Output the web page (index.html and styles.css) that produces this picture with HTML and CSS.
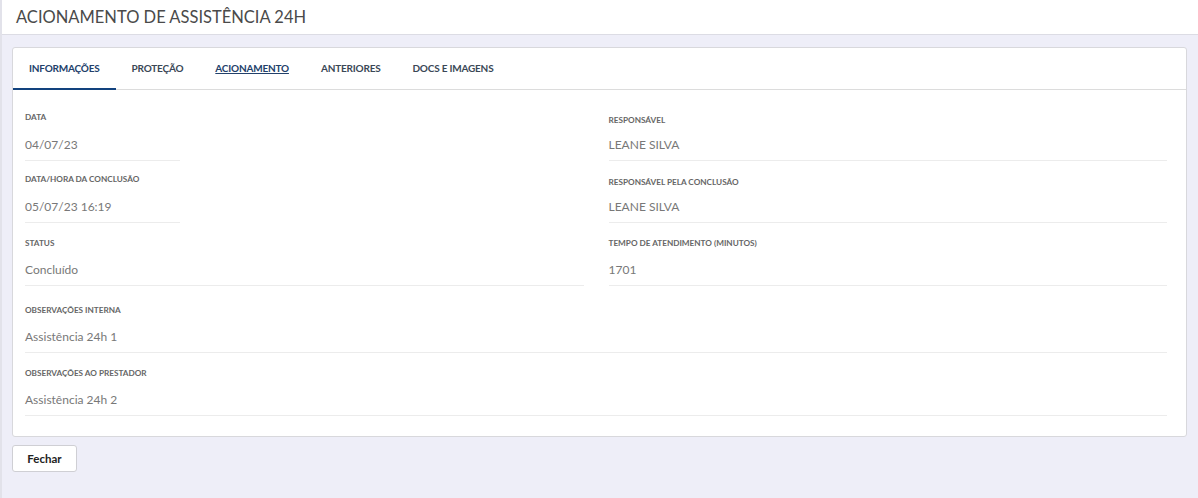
FILE: index.html
```html
<!DOCTYPE html>
<html lang="pt-BR">
<head>
<meta charset="utf-8">
<title>Acionamento de Assistência 24H</title>
<link rel="stylesheet" href="styles.css">
</head>
<body>
<header class="page-header">
  <h1 class="page-title">ACIONAMENTO DE ASSISTÊNCIA 24H</h1>
</header>
<main class="page-body">
  <section class="card">
    <nav class="tabs">
      <a class="tab tab-active">INFORMAÇÕES</a>
      <a class="tab">PROTEÇÃO</a>
      <a class="tab tab-link">ACIONAMENTO</a>
      <a class="tab">ANTERIORES</a>
      <a class="tab">DOCS E IMAGENS</a>
    </nav>
    <div class="details">
      <div class="col">
        <div class="field field-short">
          <div class="label">DATA</div>
          <div class="value">04/07/23</div>
        </div>
        <div class="field field-short">
          <div class="label">DATA/HORA DA CONCLUSÃO</div>
          <div class="value">05/07/23 16:19</div>
        </div>
        <div class="field field-mid">
          <div class="label">STATUS</div>
          <div class="value">Concluído</div>
        </div>
      </div>
      <div class="col">
        <div class="field field-low">
          <div class="label">RESPONSÁVEL</div>
          <div class="value">LEANE SILVA</div>
        </div>
        <div class="field field-low">
          <div class="label">RESPONSÁVEL PELA CONCLUSÃO</div>
          <div class="value">LEANE SILVA</div>
        </div>
        <div class="field field-mid">
          <div class="label">TEMPO DE ATENDIMENTO (MINUTOS)</div>
          <div class="value">1701</div>
        </div>
      </div>
      <div class="field field-mid field-wide field-first">
        <div class="label">OBSERVAÇÕES INTERNA</div>
        <div class="value">Assistência 24h 1</div>
      </div>
      <div class="field field-mid field-wide">
        <div class="label">OBSERVAÇÕES AO PRESTADOR</div>
        <div class="value">Assistência 24h 2</div>
      </div>
    </div>
  </section>
  <div class="actions">
    <button class="btn" type="button">Fechar</button>
  </div>
</main>
</body>
</html>
```

FILE: styles.css
```css
* {
  box-sizing: border-box;
}

html, body {
  margin: 0;
  height: 100%;
}

body {
  font-family: "Lato", "Noto Sans", sans-serif;
  background: #eeeef8;
  color: #444;
  border-left: 2px solid #e2e2ea;
}

.page-header {
  height: 35px;
  background: #fff;
  border-bottom: 1px solid #dcdce4;
  padding-left: 14px;
  display: flex;
  align-items: center;
}

.page-title {
  margin: 0;
  font-size: 16.5px;
  font-weight: 400;
  color: #4a4a4a;
}

.page-body {
  padding: 12px 11px 0 10px;
}

.card {
  background: #fff;
  border: 1px solid #d8d8dc;
  border-radius: 3px;
}

/* tab strip */
.tabs {
  display: flex;
  height: 42px;
  border-bottom: 1px solid #dcdcdc;
}

.tab {
  display: flex;
  align-items: center;
  padding: 0 16px;
  font-size: 10px;
  letter-spacing: -0.2px;
  font-weight: 700;
  color: #3a4756;
  margin-bottom: -1px;
  border-bottom: 2px solid transparent;
}

.tab-active {
  color: #22406a;
  border-bottom-color: #12427e;
}

.tab-link {
  color: #22406a;
  text-decoration: underline;
}

/* read-only detail fields */
.details {
  display: grid;
  grid-template-columns: 1fr 1fr;
  column-gap: 25px;
  padding: 9px 19px 20px 12px;
}

.col {
  display: flex;
  flex-direction: column;
}

.field {
  padding: 12px 0 7px;
  border-bottom: 1px solid #ececec;
}

.field-short {
  width: 155px;
}

.field-low {
  padding-top: 15px;
}

.field-low .label {
  margin-bottom: 11px;
}

.field-mid {
  padding-top: 14px;
}

.field-mid .label {
  margin-bottom: 13px;
}

.field-wide {
  grid-column: 1 / -1;
}

.field-first {
  padding-top: 18px;
}

.label {
  font-size: 8.2px;
  line-height: 12px;
  font-weight: 700;
  color: #666;
  margin-bottom: 14px;
}

.value {
  font-size: 12px;
  line-height: 16px;
  color: #787878;
}

.actions {
  padding-top: 8px;
}

.btn {
  width: 65px;
  height: 27px;
  background: #fff;
  border: 1px solid #cfcfd4;
  border-radius: 3px;
  font-family: "Lato", "Noto Sans", sans-serif;
  font-size: 11.5px;
  font-weight: 700;
  color: #222;
  cursor: pointer;
}
```
